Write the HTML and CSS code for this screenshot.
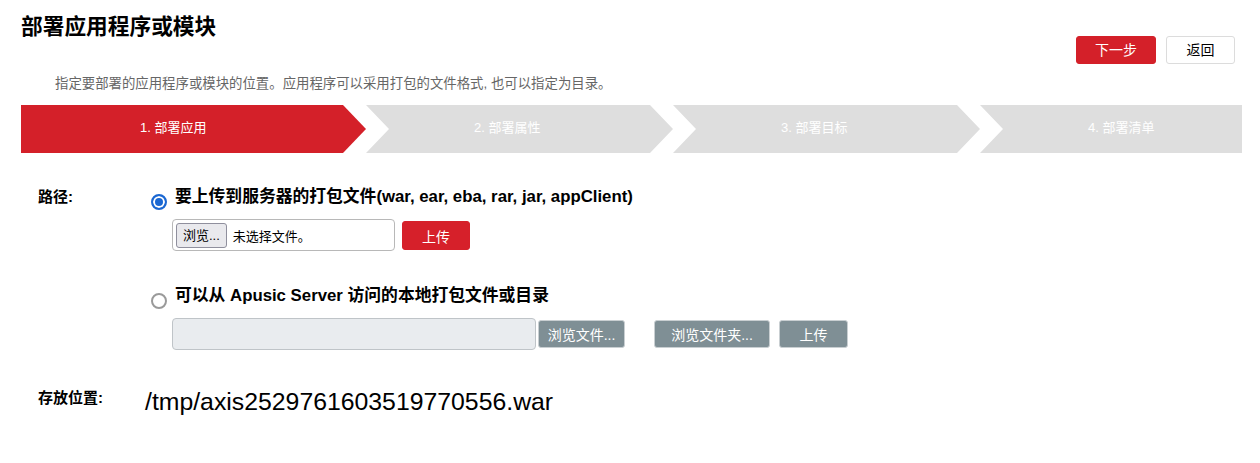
FILE: index.html
```html
<!DOCTYPE html>
<html lang="zh-CN">
<head>
<meta charset="utf-8">
<title>部署应用程序或模块</title>
<link rel="stylesheet" href="styles.css">
</head>
<body>
<div class="page">
  <header class="head">
    <h1 class="title">部署应用程序或模块</h1>
    <div class="actions">
      <button class="btn btn-primary">下一步</button>
      <button class="btn btn-default">返回</button>
    </div>
  </header>
  <p class="desc">指定要部署的应用程序或模块的位置。应用程序可以采用打包的文件格式, 也可以指定为目录。</p>

  <div class="steps">
    <div class="step step-first">1. 部署应用</div>
    <div class="step step-mid">2. 部署属性</div>
    <div class="step step-mid">3. 部署目标</div>
    <div class="step step-last">4. 部署清单</div>
  </div>

  <div class="form">
    <div class="row">
      <div class="row-label">路径:</div>
      <div class="options">
        <div class="option">
          <div class="opt-head"><span class="radio checked"></span><span>要上传到服务器的打包文件(war, ear, eba, rar, jar, appClient)</span></div>
          <div class="controls">
            <div class="filebox"><span class="file-btn">浏览...</span><span class="file-name">未选择文件。</span></div>
            <button class="btn-upload">上传</button>
          </div>
        </div>
        <div class="option">
          <div class="opt-head"><span class="radio"></span><span>可以从 Apusic Server 访问的本地打包文件或目录</span></div>
          <div class="controls">
            <div class="pathbox"></div>
            <button class="btn-gray btn-files">浏览文件...</button>
            <button class="btn-gray btn-folder">浏览文件夹...</button>
            <button class="btn-gray btn-up2">上传</button>
          </div>
        </div>
      </div>
    </div>
    <div class="row row-store">
      <div class="row-label store-label">存放位置:</div>
      <div class="store-value">/tmp/axis2529761603519770556.war</div>
    </div>
  </div>
</div>
</body>
</html>
```

FILE: styles.css
```css
* { box-sizing: border-box; }
body {
  margin: 0;
  background: #fff;
  color: #000;
  font-family: "Liberation Sans", "Noto Sans CJK SC", sans-serif;
}
.page {
  width: 1260px;
  padding: 0 18px 0 21px;
}
.head {
  display: flex;
  justify-content: space-between;
  align-items: flex-start;
  padding-right: 7px;
}
.title {
  margin: 0;
  padding-top: 12px;
  font-size: 21.7px;
  line-height: 30px;
  font-weight: bold;
}
.actions {
  display: flex;
  gap: 10px;
  margin-top: 36px;
}
.btn {
  height: 28px;
  padding: 0;
  font-family: inherit;
  font-size: 14px;
  line-height: 26px;
  border-radius: 3px;
  border: 1px solid;
}
.btn-primary {
  width: 80px;
  background: #d42029;
  border-color: #d42029;
  color: #fff;
}
.btn-default {
  width: 69px;
  background: #fff;
  border-color: #dcdcdc;
  color: #000;
}
.desc {
  margin: 10px 0 0 34px;
  font-size: 13.4px;
  line-height: 20px;
  color: #666;
}
.steps {
  display: flex;
  height: 48px;
  margin-top: 11px;
}
.step {
  height: 48px;
  display: flex;
  align-items: center;
  padding-bottom: 5px;
  font-size: 13px;
  color: #fff;
  background: #dedede;
}
.step-first {
  width: 345px;
  padding-left: 119px;
  background: #d42029;
  clip-path: polygon(0 0, 322px 0, 345px 50%, 322px 100%, 0 100%);
}
.step-mid {
  width: 307px;
  padding-left: 108px;
  clip-path: polygon(0 0, 284px 0, 307px 50%, 284px 100%, 0 100%, 23px 50%);
}
.step-last {
  flex: 1;
  padding-left: 108px;
  clip-path: polygon(0 0, 100% 0, 100% 100%, 0 100%, 23px 50%);
}
.form {
  padding-left: 17px;
  margin-top: 33px;
}
.row {
  display: flex;
  align-items: flex-start;
}
.row-label {
  width: 113px;
  font-size: 15px;
  font-weight: bold;
  line-height: 22px;
}
.options {
  display: flex;
  flex-direction: column;
}
.option + .option {
  margin-top: 34px;
}
.opt-head {
  display: flex;
  align-items: flex-start;
  gap: 8px;
  font-size: 16.8px;
  font-weight: bold;
  line-height: 22px;
}
.radio {
  width: 16px;
  height: 16px;
  flex: none;
  margin-top: 8px;
  border-radius: 50%;
  border: 2px solid #9a9a9a;
  background: #fff;
}
.radio.checked {
  border-color: #1a67d2;
  background: #1a67d2;
  box-shadow: inset 0 0 0 2px #fff;
}
.controls {
  display: flex;
  align-items: flex-start;
  margin-top: 9px;
  padding-left: 21px;
}
.filebox {
  width: 223px;
  height: 32px;
  display: flex;
  align-items: center;
  gap: 6px;
  padding-left: 3px;
  border: 1px solid #b8b8b8;
  border-radius: 4px;
  font-size: 13px;
}
.file-btn {
  height: 25px;
  padding: 0 6px;
  line-height: 23px;
  border: 1px solid #8f8f9d;
  border-radius: 3px;
  background: #e9e9ed;
}
.btn-upload {
  width: 68px;
  height: 29px;
  margin: 2px 0 0 7px;
  padding: 0;
  border: 1px solid #d6202a;
  border-radius: 3px;
  background: #d6202a;
  color: #fff;
  font-family: inherit;
  font-size: 14px;
}
.pathbox {
  width: 364px;
  height: 32px;
  background: #e9ecef;
  border: 1px solid #bfc4c8;
  border-radius: 4px;
}
.btn-gray {
  height: 28px;
  margin-top: 2px;
  padding: 0;
  border: 1px solid #c9cfd2;
  border-radius: 3px;
  background: #7f8f95;
  color: #fff;
  font-family: inherit;
  font-size: 14px;
}
.btn-files { width: 87px; margin-left: 2px; }
.btn-folder { width: 116px; margin-left: 29px; }
.btn-up2 { width: 69px; margin-left: 9px; }
.row-store {
  margin-top: 37px;
}
.store-label {
  width: 107px;
}
.store-value {
  font-size: 24.8px;
  line-height: 30px;
}
```
